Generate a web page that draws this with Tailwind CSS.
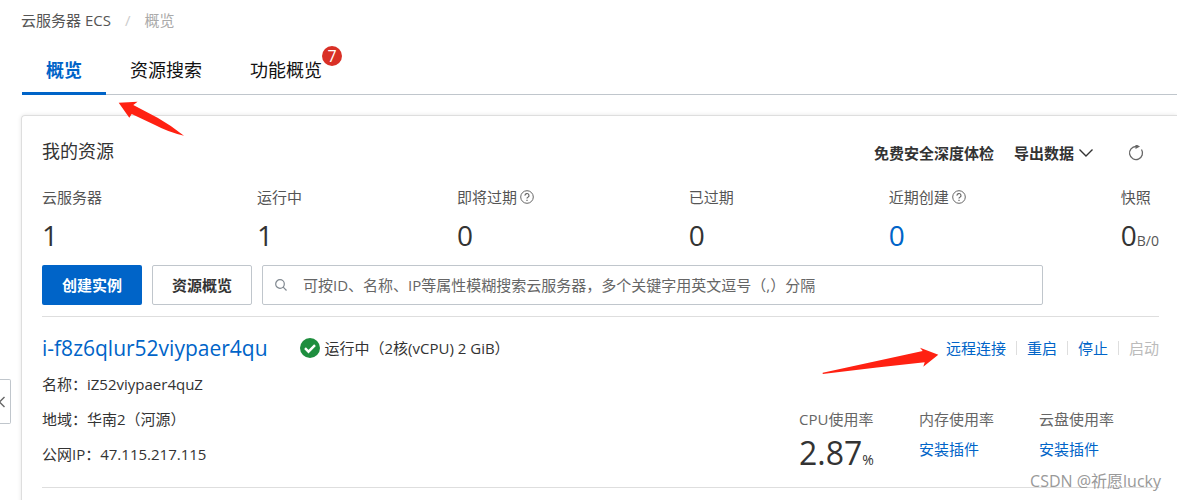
<!DOCTYPE html>
<html lang="zh-CN">
<head>
  <meta charset="UTF-8">
  <meta name="viewport" content="width=device-width, initial-scale=1">
  <title>云服务器 ECS - 概览</title>
  <script src="https://cdn.jsdelivr.net/npm/@tailwindcss/browser@4"></script>
</head>
<body class="relative min-h-screen overflow-x-hidden bg-white font-['Open_Sans','Noto_Sans_CJK_SC',sans-serif] text-[15px] leading-5 text-[#333]">

  <!-- 面包屑 -->
  <nav class="flex gap-[14px] pt-[10px] pl-[21px]">
    <a href="#" class="text-[#555]">云服务器 ECS</a>
    <span class="text-[#ccc]">/</span>
    <span class="text-[#aaa]">概览</span>
  </nav>

  <!-- 标签页 -->
  <nav class="mt-7 ml-[22px] flex shadow-[inset_0_-1px_0_#c0c6cc] text-lg leading-6 text-[#111]">
    <a href="#" class="border-b-3 border-[#0064c8] px-6 pb-[10px] font-bold text-[#0064c8]">概览</a>
    <a href="#" class="px-6">资源搜索</a>
    <a href="#" class="relative px-6">功能概览
      <span class="absolute -top-3 right-1 size-5 rounded-full bg-[#d93026] text-center text-base leading-5 text-white">7</span>
    </a>
  </nav>

  <!-- 我的资源 -->
  <main class="mt-5 ml-[21px] rounded-tl border-t border-l border-[#dedede] pt-[23px] pr-[18px] pb-6 pl-5 shadow-[0_0_4px_rgba(0,0,0,0.1)]">
    <div class="flex items-center">
      <h1 class="text-lg leading-6">我的资源</h1>
      <div class="ml-auto flex items-center pt-1">
        <button class="font-bold">免费安全深度体检</button>
        <button class="ml-5 flex items-center gap-1 font-bold">导出数据
          <svg class="size-4" viewBox="0 0 16 16" fill="none" stroke="#333" stroke-width="1.4"><path d="M1.500 4.500 8 11l6.500-6.500"/></svg>
        </button>
        <button class="mr-[15px] ml-[34px]" aria-label="刷新">
          <svg class="size-4" viewBox="0 0 16 16" fill="none" stroke="#666" stroke-width="1.3"><path d="M13.500 4.500A6.500 6.500 0 1 1 8 1.500"/><path d="M7.500-1 12 1.500 7.500 4z" fill="#666" stroke="none"/></svg>
        </button>
      </div>
    </div>

    <dl class="mt-6 flex justify-between">
      <div>
        <dt class="text-[#555]">云服务器</dt>
        <dd class="mt-3 text-[28px] leading-8">1</dd>
      </div>
      <div>
        <dt class="text-[#555]">运行中</dt>
        <dd class="mt-3 text-[28px] leading-8">1</dd>
      </div>
      <div>
        <dt class="flex items-center gap-[3px] text-[#555]">即将过期
          <svg class="size-[14px]" viewBox="0 0 14 14" fill="none" stroke="#666"><circle cx="7" cy="7" r="6.300"/><path d="M5 5.600a2 2 0 1 1 2.900 1.700Q7 7.700 7 8.600M7 9.800v1.200" stroke-width="1.200"/></svg>
        </dt>
        <dd class="mt-3 text-[28px] leading-8">0</dd>
      </div>
      <div>
        <dt class="text-[#555]">已过期</dt>
        <dd class="mt-3 text-[28px] leading-8">0</dd>
      </div>
      <div>
        <dt class="flex items-center gap-[3px] text-[#555]">近期创建
          <svg class="size-[14px]" viewBox="0 0 14 14" fill="none" stroke="#666"><circle cx="7" cy="7" r="6.300"/><path d="M5 5.600a2 2 0 1 1 2.900 1.700Q7 7.700 7 8.600M7 9.800v1.200" stroke-width="1.200"/></svg>
        </dt>
        <dd class="mt-3 text-[28px] leading-8"><a href="#" class="text-[#0064c8]">0</a></dd>
      </div>
      <div>
        <dt class="text-[#555]">快照</dt>
        <dd class="mt-3 text-[28px] leading-8">0<span class="text-sm text-[#555]">B/0</span></dd>
      </div>
    </dl>

    <div class="mt-[14px] flex gap-[10px]">
      <button class="h-10 rounded-xs bg-[#0064c8] px-5 font-bold text-white">创建实例</button>
      <button class="h-10 rounded-xs border border-[#c0c6cc] px-[19px] font-bold">资源概览</button>
      <label class="mr-[116px] flex h-10 flex-1 items-center gap-4 rounded-xs border border-[#c0c6cc] px-3">
        <svg class="size-3 shrink-0" viewBox="0 0 12 12" fill="none" stroke="#808890" stroke-width="1.200"><circle cx="5" cy="5" r="4.300"/><path d="m8.200 8.200 3.300 3.300"/></svg>
        <input type="text" aria-label="搜索云服务器" placeholder="可按ID、名称、IP等属性模糊搜索云服务器，多个关键字用英文逗号（,）分隔" class="min-w-0 flex-1 outline-none placeholder:text-[#666]">
      </label>
    </div>

    <!-- 实例 -->
    <section class="mt-[11px] border-y border-[#dedede] pt-[17px] pb-[23px]">
      <div class="flex items-center">
        <a href="#" class="text-[21px] leading-7 text-[#0064c8]">i-f8z6qlur52viypaer4qu</a>
        <svg class="ml-8 size-5" viewBox="0 0 20 20"><circle cx="10" cy="10" r="10" fill="#1e8e3e"/><path d="m5 10.200 3.500 3.500L15 7.200" fill="none" stroke="#fff" stroke-width="2.400"/></svg>
        <span class="ml-[5px]">运行中（2核(vCPU) 2 GiB）</span>
        <div class="ml-auto flex items-center gap-[10px] text-[#0064c8]">
          <a href="#">远程连接</a>
          <span class="h-[14px] border-l border-[#dedede]"></span>
          <a href="#">重启</a>
          <span class="h-[14px] border-l border-[#dedede]"></span>
          <a href="#">停止</a>
          <span class="h-[14px] border-l border-[#dedede]"></span>
          <button disabled class="text-[#bbb]">启动</button>
        </div>
      </div>
      <div class="mt-3 flex items-end justify-between">
        <div class="flex flex-col gap-[15px]">
          <p>名称：iZ52viypaer4quZ</p>
          <p>地域：华南2（河源）</p>
          <p>公网IP：47.115.217.115</p>
        </div>
        <dl class="grid grid-cols-[120px_120px_120px]">
          <div>
            <dt class="text-[#666]">CPU使用率</dt>
            <dd class="mt-2 h-[27px] text-[32px] leading-8">2.87<span class="text-sm">%</span></dd>
          </div>
          <div>
            <dt class="text-[#666]">内存使用率</dt>
            <dd class="mt-[10px]"><a href="#" class="text-[#0064c8]">安装插件</a></dd>
          </div>
          <div>
            <dt class="text-[#666]">云盘使用率</dt>
            <dd class="mt-[10px]"><a href="#" class="text-[#0064c8]">安装插件</a></dd>
          </div>
        </dl>
      </div>
    </section>
  </main>

  <!-- 侧栏展开按钮 -->
  <button class="absolute top-[379px] left-0 flex h-[45px] w-[11px] items-center rounded-r-xs border border-l-0 border-[#c0c6cc] bg-white" aria-label="展开侧栏">
    <svg class="h-3 w-[5px]" viewBox="0 0 5 12" fill="none" stroke="#666" stroke-width="1.400"><path d="M4.500 1-.500 6l5 5"/></svg>
  </button>

  <!-- 标注箭头 -->
  <svg class="absolute top-[101px] left-[118px] h-9 w-[67px]" viewBox="0 0 67 36" fill="#ff2112"><path d="M.700 1.700 19.600.700 15.300 4 40 17Q54 25 66 34.700 50 31 37 24L13.700 13l-2.400 3.700z"/></svg>
  <svg class="absolute top-[347px] left-[822px] h-7 w-[117px]" viewBox="0 0 117 28" fill="#ff2112"><path d="M.700 25.700 100.700 4 98 .700l18.300 7-15 12 1.400-4.400L55 20.500.700 27z"/></svg>

  <!-- 水印 -->
  <span class="absolute top-[471px] right-4 text-base leading-5 text-[#999]">CSDN @祈愿lucky</span>
</body>
</html>
